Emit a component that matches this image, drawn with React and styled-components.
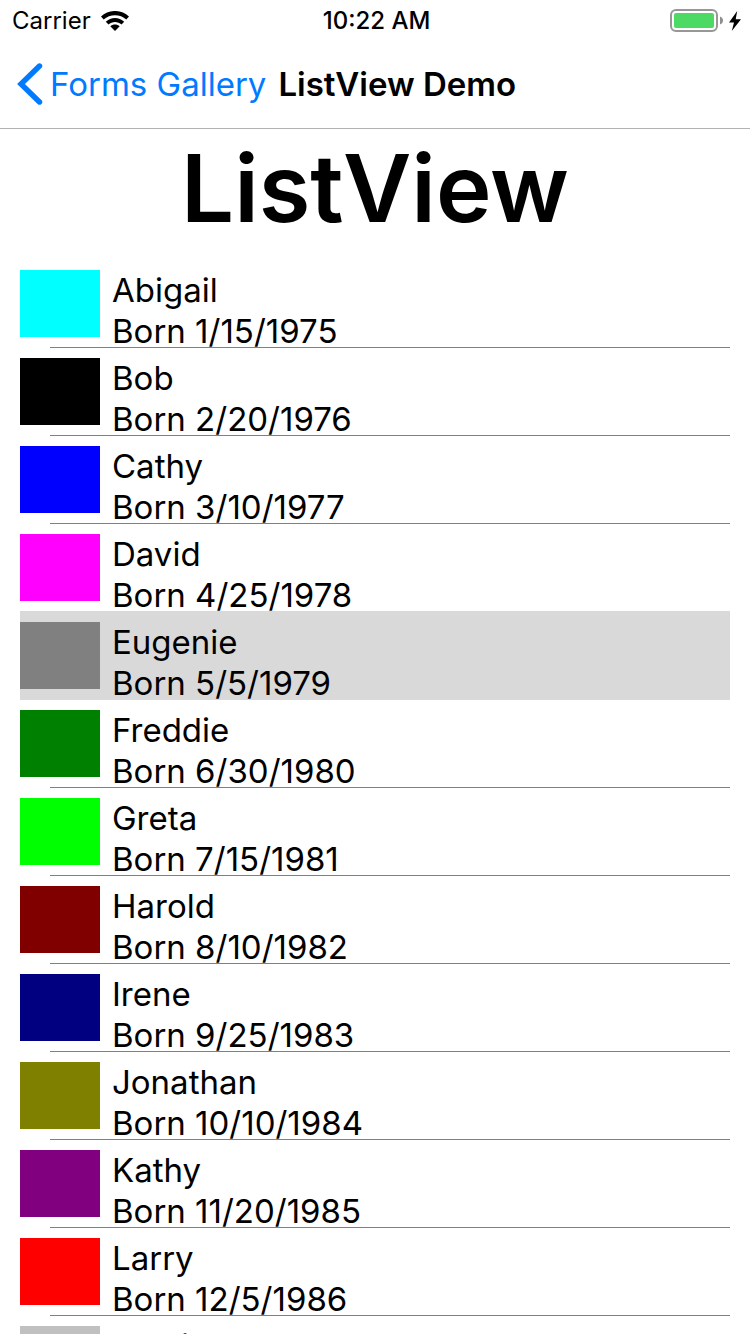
import React, { useState } from "react";
import styled, { createGlobalStyle } from "styled-components";

const GlobalStyle = createGlobalStyle`
  *, *::before, *::after { box-sizing: border-box; }
  body {
    margin: 0;
    background: #fff;
    color: #000;
    font-family: Inter, "Liberation Sans", sans-serif;
  }
`;

const Screen = styled.div`
  height: 100vh;
  display: flex;
  flex-direction: column;
  overflow: hidden;
`;

const StatusBar = styled.header`
  flex: none;
  height: 40px;
  padding: 2px 9px 0 12px;
  display: grid;
  grid-template-columns: 1fr auto 1fr;
  align-items: center;
  font-size: 24px;
  line-height: 38px;
`;

const StatusGroup = styled.div`
  display: flex;
  align-items: center;
  justify-content: ${(p) => (p.$end ? "flex-end" : "flex-start")};
  gap: ${(p) => (p.$end ? 6 : 10)}px;
`;

const Clock = styled.time`
  font-weight: 500;
`;

const NavBar = styled.nav`
  flex: none;
  height: 89px;
  padding: 0 17px;
  display: flex;
  align-items: center;
  gap: 12px;
  border-bottom: 1px solid #b2b2b2;
  font-size: 33px;
  line-height: 40px;
  white-space: nowrap;
`;

const BackLink = styled.a`
  display: flex;
  align-items: center;
  gap: 7px;
  color: #007aff;
  text-decoration: none;
`;

const NavTitle = styled.span`
  font-weight: 600;
`;

const Main = styled.main`
  flex: 1;
  min-height: 0;
  padding: 0 20px;
  display: flex;
  flex-direction: column;
`;

const Heading = styled.h1`
  flex: none;
  margin: 0;
  padding-bottom: 12px;
  font-size: 94px;
  font-weight: 600;
  line-height: 119px;
  text-align: center;
`;

const PeopleList = styled.ul`
  flex: 1;
  min-height: 0;
  margin: 0;
  padding: 0;
  overflow: hidden;
  list-style: none;
`;

const PersonItem = styled.li`
  height: 88px;
  background: linear-gradient(#808080, #808080) right bottom / calc(100% - 30px)
    ${(p) => (p.$plain ? 0 : 1)}px no-repeat;
`;

const PersonButton = styled.button`
  width: 100%;
  height: 88px;
  padding: 10px 0 0;
  border: 0;
  display: flex;
  align-items: flex-start;
  gap: 12px;
  background: ${(p) => (p.$selected ? "#d9d9d9" : "transparent")};
  box-shadow: ${(p) => (p.$selected ? "0 -1px 0 #d9d9d9" : "none")};
  color: inherit;
  font: inherit;
  font-size: 33px;
  line-height: 41px;
  text-align: left;
`;

const Swatch = styled.span`
  flex: none;
  width: 80px;
  height: 67px;
  background: ${(p) => p.$color};
`;

const Details = styled.span`
  display: flex;
  flex-direction: column;
`;

const people = [
  { name: "Abigail", born: "1/15/1975", color: "#00ffff" },
  { name: "Bob", born: "2/20/1976", color: "#000000" },
  { name: "Cathy", born: "3/10/1977", color: "#0000ff" },
  { name: "David", born: "4/25/1978", color: "#ff00ff" },
  { name: "Eugenie", born: "5/5/1979", color: "#808080" },
  { name: "Freddie", born: "6/30/1980", color: "#008000" },
  { name: "Greta", born: "7/15/1981", color: "#00ff00" },
  { name: "Harold", born: "8/10/1982", color: "#800000" },
  { name: "Irene", born: "9/25/1983", color: "#000080" },
  { name: "Jonathan", born: "10/10/1984", color: "#808000" },
  { name: "Kathy", born: "11/20/1985", color: "#800080" },
  { name: "Larry", born: "12/5/1986", color: "#ff0000" },
  { name: "Monica", born: "1/5/1975", color: "#c0c0c0" },
];

function WifiIcon() {
  return (
    <svg width="28" height="20" viewBox="0 0 28 20" aria-hidden="true">
      <path d="M0 5.6C7.6-1.9 20.4-1.9 28 5.6L25.3 8.5C19.2 2.8 8.8 2.8 2.7 8.5Z" />
      <path d="M4.8 10.7C9.8 5.6 18.2 5.6 23.2 10.7L20.5 13.5C17 10 11 10 7.5 13.5Z" />
      <path d="M9.3 15.3C11.9 12.8 16.1 12.8 18.7 15.3L14 20Z" />
    </svg>
  );
}

function BatteryIcon() {
  return (
    <svg width="53" height="24" viewBox="0 0 53 24" aria-hidden="true">
      <rect x="1" y="1" width="46" height="21" rx="5" fill="none" stroke="#979797" strokeWidth="2" />
      <rect x="4" y="4" width="40" height="15" rx="2" fill="#4cd964" />
      <path d="M50 7.5C52 8.2 53 9.7 53 11.5S52 14.8 50 15.5Z" fill="#8e8e8e" />
    </svg>
  );
}

function BoltIcon() {
  return (
    <svg width="12" height="20" viewBox="0 0 12 20" aria-hidden="true">
      <path d="M8.2 0L0 11.4H5L2.8 20L12 8.2H6.7Z" />
    </svg>
  );
}

function BackIcon() {
  return (
    <svg width="26" height="42" viewBox="0 0 26 42" aria-hidden="true">
      <path
        d="M22.5 3L4 21L22.5 39"
        fill="none"
        stroke="currentColor"
        strokeWidth="5.4"
        strokeLinecap="round"
        strokeLinejoin="miter"
      />
    </svg>
  );
}

export default function App() {
  const [selected, setSelected] = useState("Eugenie");
  return (
    <Screen>
      <GlobalStyle />
      <StatusBar>
        <StatusGroup>
          <span>Carrier</span>
          <WifiIcon />
        </StatusGroup>
        <Clock>10:22 AM</Clock>
        <StatusGroup $end>
          <BatteryIcon />
          <BoltIcon />
        </StatusGroup>
      </StatusBar>
      <NavBar>
        <BackLink href="#gallery">
          <BackIcon />
          Forms Gallery
        </BackLink>
        <NavTitle>ListView Demo</NavTitle>
      </NavBar>
      <Main>
        <Heading>ListView</Heading>
        <PeopleList>
          {people.map((person, i) => {
            const next = people[i + 1];
            return (
              <PersonItem
                key={person.name}
                $plain={person.name === selected || (next && next.name === selected)}
              >
                <PersonButton
                  type="button"
                  $selected={person.name === selected}
                  aria-pressed={person.name === selected}
                  onClick={() => setSelected(person.name)}
                >
                  <Swatch $color={person.color} />
                  <Details>
                    <span>{person.name}</span>
                    <span>Born {person.born}</span>
                  </Details>
                </PersonButton>
              </PersonItem>
            );
          })}
        </PeopleList>
      </Main>
    </Screen>
  );
}
